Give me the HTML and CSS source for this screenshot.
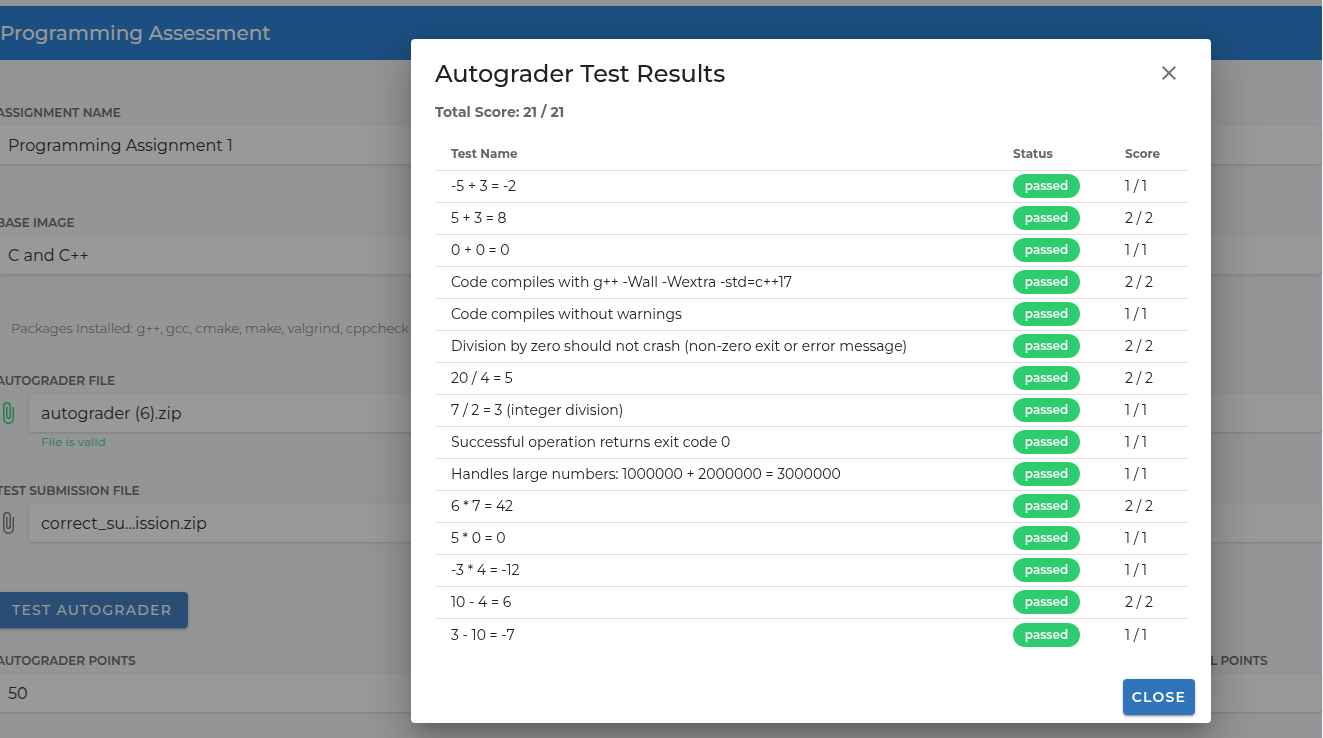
FILE: index.html
```html
<!DOCTYPE html>
<html lang="en">
<head>
  <meta charset="UTF-8" />
  <meta name="viewport" content="width=device-width, initial-scale=1.0" />
  <title>Programming Assessment</title>
  <link rel="stylesheet" href="styles.css">
</head>
<body>
  <main class="page">
    <header class="page-header">
      <h1>Programming Assessment</h1>
    </header>

    <form class="form">
      <div class="field">
        <label for="name">Assignment Name</label>
        <input class="control" id="name" type="text" value="Programming Assignment 1">
      </div>

      <div class="field">
        <label for="image">Base Image</label>
        <select class="control" id="image">
          <option>C and C++</option>
        </select>
      </div>

      <p class="packages">Packages Installed: g++, gcc, cmake, make, valgrind, cppcheck</p>

      <div class="field file-field">
        <label for="autograder">Autograder File</label>
        <div class="file-row">
          <svg class="clip valid" viewBox="0 0 24 24" aria-hidden="true"><path d="M16.5,6V17.5A4,4 0 0,1 12.5,21.5A4,4 0 0,1 8.5,17.5V5A2.5,2.5 0 0,1 11,2.5A2.5,2.5 0 0,1 13.5,5V15.5A1,1 0 0,1 12.5,16.5A1,1 0 0,1 11.5,15.5V6H10V15.5A2.5,2.5 0 0,0 12.5,18A2.5,2.5 0 0,0 15,15.5V5A4,4 0 0,0 11,1A4,4 0 0,0 7,5V17.5A5.5,5.5 0 0,0 12.5,23A5.5,5.5 0 0,0 18,17.5V6H16.5Z"/></svg>
          <input class="control" id="autograder" type="text" value="autograder (6).zip" readonly>
        </div>
        <p class="hint">File is valid</p>
      </div>

      <div class="field file-field">
        <label for="submission">Test Submission File</label>
        <div class="file-row">
          <svg class="clip" viewBox="0 0 24 24" aria-hidden="true"><path d="M16.5,6V17.5A4,4 0 0,1 12.5,21.5A4,4 0 0,1 8.5,17.5V5A2.5,2.5 0 0,1 11,2.5A2.5,2.5 0 0,1 13.5,5V15.5A1,1 0 0,1 12.5,16.5A1,1 0 0,1 11.5,15.5V6H10V15.5A2.5,2.5 0 0,0 12.5,18A2.5,2.5 0 0,0 15,15.5V5A4,4 0 0,0 11,1A4,4 0 0,0 7,5V17.5A5.5,5.5 0 0,0 12.5,23A5.5,5.5 0 0,0 18,17.5V6H16.5Z"/></svg>
          <input class="control" id="submission" type="text" value="correct_su...ission.zip" readonly>
        </div>
      </div>

      <button class="btn btn-test" type="button">Test Autograder</button>

      <div class="points">
        <div class="field">
          <label for="autoPoints">Autograder Points</label>
          <input class="control" id="autoPoints" type="text" value="50">
        </div>
        <div class="field">
          <label for="totalPoints">Total Points</label>
          <input class="control" id="totalPoints" type="text">
        </div>
      </div>
    </form>
  </main>

  <div class="overlay">
    <section class="dialog" role="dialog" aria-labelledby="dialogTitle">
      <div class="dialog-title">
        <h2 id="dialogTitle">Autograder Test Results</h2>
        <button class="btn-icon" type="button" aria-label="Close dialog">
          <svg viewBox="0 0 24 24" aria-hidden="true"><path d="M19,6.41L17.59,5L12,10.59L6.41,5L5,6.41L10.59,12L5,17.59L6.41,19L12,13.41L17.59,19L19,17.59L13.41,12L19,6.41Z"/></svg>
        </button>
      </div>
      <p class="total">Total Score: 21 / 21</p>

      <table class="results">
        <thead>
          <tr><th>Test Name</th><th class="col-status">Status</th><th class="col-score">Score</th></tr>
        </thead>
        <tbody>
          <tr><td>-5 + 3 = -2</td><td><span class="chip">passed</span></td><td>1 / 1</td></tr>
          <tr><td>5 + 3 = 8</td><td><span class="chip">passed</span></td><td>2 / 2</td></tr>
          <tr><td>0 + 0 = 0</td><td><span class="chip">passed</span></td><td>1 / 1</td></tr>
          <tr><td>Code compiles with g++ -Wall -Wextra -std=c++17</td><td><span class="chip">passed</span></td><td>2 / 2</td></tr>
          <tr><td>Code compiles without warnings</td><td><span class="chip">passed</span></td><td>1 / 1</td></tr>
          <tr><td>Division by zero should not crash (non-zero exit or error message)</td><td><span class="chip">passed</span></td><td>2 / 2</td></tr>
          <tr><td>20 / 4 = 5</td><td><span class="chip">passed</span></td><td>2 / 2</td></tr>
          <tr><td>7 / 2 = 3 (integer division)</td><td><span class="chip">passed</span></td><td>1 / 1</td></tr>
          <tr><td>Successful operation returns exit code 0</td><td><span class="chip">passed</span></td><td>1 / 1</td></tr>
          <tr><td>Handles large numbers: 1000000 + 2000000 = 3000000</td><td><span class="chip">passed</span></td><td>1 / 1</td></tr>
          <tr><td>6 * 7 = 42</td><td><span class="chip">passed</span></td><td>2 / 2</td></tr>
          <tr><td>5 * 0 = 0</td><td><span class="chip">passed</span></td><td>1 / 1</td></tr>
          <tr><td>-3 * 4 = -12</td><td><span class="chip">passed</span></td><td>1 / 1</td></tr>
          <tr><td>10 - 4 = 6</td><td><span class="chip">passed</span></td><td>2 / 2</td></tr>
          <tr><td>3 - 10 = -7</td><td><span class="chip">passed</span></td><td>1 / 1</td></tr>
        </tbody>
      </table>

      <div class="dialog-actions">
        <button class="btn btn-close" type="button">Close</button>
      </div>
    </section>
  </div>
</body>
</html>
```
FILE: styles.css
```css
* {
  box-sizing: border-box;
}

body {
  margin: 0;
  min-height: 100vh;
  overflow: hidden;
  background: #f5f7fa;
  color: #212121;
  font-family: Montserrat, Inter, sans-serif;
  font-size: 16px;
}

h1, h2, p {
  margin: 0;
}

.page {
  margin-right: 1px;
  padding-top: 6px;
}

.page-header {
  display: flex;
  align-items: center;
  height: 54px;
  background: #1976d2;
  color: #fff;
}

.page-header h1 {
  font-size: 20px;
  font-weight: 500;
}

/* the form bleeds slightly past the left edge */
.form {
  margin-left: -4px;
  padding-top: 40px;
}

.field {
  display: flex;
  flex-direction: column;
  margin-bottom: 46px;
}

.field label {
  height: 26px;
  line-height: 26px;
  font-size: 12px;
  font-weight: 600;
  text-transform: uppercase;
  color: #616161;
}

.control {
  width: 100%;
  height: 38px;
  padding: 0 12px;
  border: 0;
  border-radius: 4px;
  background: #fff;
  box-shadow: 0 1px 3px rgba(0, 0, 0, 0.16);
  color: #212121;
  font-family: inherit;
  font-size: 16px;
  font-weight: 400;
  appearance: none;
}

.packages {
  padding-left: 15px;
  margin-bottom: 32px;
  font-size: 13px;
  line-height: 16px;
  font-weight: 300;
  color: #616161;
}

.file-field {
  height: 64px;
}

.file-row {
  display: flex;
  align-items: center;
  gap: 9px;
}

.clip {
  flex: none;
  width: 24px;
  height: 24px;
  fill: #757575;
}

.clip.valid {
  fill: #2ecc71;
}

.hint {
  padding-left: 45px;
  font-size: 12px;
  line-height: 20px;
  color: #2ecc71;
}

.btn {
  height: 36px;
  border: 0;
  border-radius: 4px;
  background: #3074bc;
  box-shadow: 0 3px 1px -2px rgba(0, 0, 0, 0.2), 0 2px 2px rgba(0, 0, 0, 0.14), 0 1px 5px rgba(0, 0, 0, 0.12);
  color: #fff;
  font-family: inherit;
  font-size: 14px;
  font-weight: 500;
  letter-spacing: 0.09em;
  text-transform: uppercase;
  cursor: pointer;
}

.btn-test {
  display: block;
  margin: 50px 0 20px;
  padding: 0 16px;
}

.points {
  display: grid;
  grid-template-columns: 1fr 145px;
}

.overlay {
  position: fixed;
  inset: 0 1px 0 0;
  display: flex;
  justify-content: flex-end;
  align-items: flex-start;
  padding: 39px 111px 0 24px;
  background: rgba(33, 33, 33, 0.46);
}

.dialog {
  width: 100%;
  max-width: 800px;
  padding: 16px 24px 8px;
  border-radius: 4px;
  background: #fff;
  box-shadow: 0 11px 15px -7px rgba(0, 0, 0, 0.2), 0 24px 38px 3px rgba(0, 0, 0, 0.14), 0 9px 46px 8px rgba(0, 0, 0, 0.12);
}

.dialog-title {
  display: flex;
  justify-content: space-between;
  align-items: center;
  height: 36px;
}

.dialog-title h2 {
  font-size: 24px;
  font-weight: 500;
}

.btn-icon {
  display: flex;
  align-items: center;
  justify-content: center;
  width: 36px;
  height: 36px;
  padding: 0;
  border: 0;
  background: none;
  cursor: pointer;
}

.btn-icon svg {
  width: 24px;
  height: 24px;
  fill: #757575;
}

.total {
  margin: 10px 0 14px;
  font-size: 14px;
  line-height: 22px;
  font-weight: 700;
  color: #666;
}

.results {
  width: 100%;
  table-layout: fixed;
  border-collapse: separate;
  border-spacing: 0;
  text-align: left;
}

.results th,
.results td {
  height: 32px;
  padding: 0 16px 1px;
  border-bottom: 1px solid #e0e0e0;
  font-size: 14px;
  white-space: nowrap;
}

.results th {
  height: 34px;
  padding-bottom: 0;
  font-size: 12px;
  font-weight: 700;
  color: #666;
}

.results tr:last-child td {
  border-bottom: 0;
}

.results thead th {
  border-bottom: 1px solid #e0e0e0;
}

.results .col-status {
  width: 112px;
}

.results .col-score {
  width: 78px;
}

.chip {
  display: block;
  width: 67px;
  height: 24px;
  border-radius: 12px;
  background: #2ecc71;
  color: #fff;
  font-size: 12px;
  line-height: 24px;
  font-weight: 600;
  text-align: center;
}

.dialog-actions {
  display: flex;
  justify-content: flex-end;
  margin-top: 28px;
  margin-right: -8px;
}

.btn-close {
  min-width: 72px;
  padding: 0 8px;
  font-weight: 600;
}
```
